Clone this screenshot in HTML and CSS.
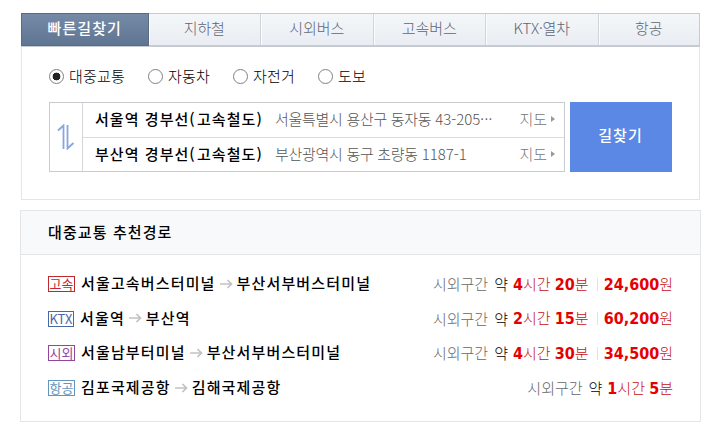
FILE: index.html
```html
<!DOCTYPE html>
<html lang="ko">
<head>
<meta charset="utf-8">
<title>빠른길찾기</title>
<link rel="stylesheet" href="styles.css">
</head>
<body>
<main class="page">
  <section class="finder">
    <nav class="tabs">
      <a class="tab active">빠른길찾기</a>
      <a class="tab">지하철</a>
      <a class="tab">시외버스</a>
      <a class="tab">고속버스</a>
      <a class="tab">KTX·열차</a>
      <a class="tab last">항공</a>
    </nav>
    <div class="modes">
      <label class="mode wide"><i class="radio on"></i>대중교통</label>
      <label class="mode"><i class="radio"></i>자동차</label>
      <label class="mode"><i class="radio"></i>자전거</label>
      <label class="mode"><i class="radio"></i>도보</label>
    </div>
    <div class="search">
      <div class="box">
        <div class="swap">
          <svg width="18" height="26" viewBox="0 0 18 26" fill="none" stroke="#86a6e2" stroke-width="1.8"><path d="M6.500 25V1.500L1 6.500"/><path d="M10.500 1v23.500L16.500 19"/></svg>
        </div>
        <div class="places">
          <div class="place"><b class="name">서울역 경부선<span class="paren">(</span>고속철도<span class="paren">)</span></b><span class="addr">서울특별시 용산구 동자동 <span class="num">43-205</span><span class="dots">···</span></span><a class="map">지도<i class="tri"></i></a></div>
          <div class="place"><b class="name">부산역 경부선<span class="paren">(</span>고속철도<span class="paren">)</span></b><span class="addr">부산광역시 동구 초량동 <span class="num">1187-1</span></span><a class="map">지도<i class="tri"></i></a></div>
        </div>
      </div>
      <button class="go">길찾기</button>
    </div>
  </section>
  <section class="routes">
    <h2 class="title">대중교통 추천경로</h2>
    <ul class="list">
      <li class="row"><span class="badge express">고속</span><b class="stop">서울고속버스터미널</b><svg class="arrow" width="13" height="10" viewBox="0 0 13 10"><path d="M0 5h11M7.500 1l4 4-4 4"/></svg><b class="stop">부산서부버스터미널</b><span class="info"><span class="leg">시외구간</span><span class="about">약</span><span class="red"><b>4</b>시간 <b>20</b>분</span><i class="bar"></i><span class="red"><b>24,600</b>원</span></span></li>
      <li class="row"><span class="badge ktx">KTX</span><b class="stop">서울역</b><svg class="arrow" width="13" height="10" viewBox="0 0 13 10"><path d="M0 5h11M7.500 1l4 4-4 4"/></svg><b class="stop">부산역</b><span class="info"><span class="leg">시외구간</span><span class="about">약</span><span class="red"><b>2</b>시간 <b>15</b>분</span><i class="bar"></i><span class="red"><b>60,200</b>원</span></span></li>
      <li class="row"><span class="badge intercity">시외</span><b class="stop">서울남부터미널</b><svg class="arrow" width="13" height="10" viewBox="0 0 13 10"><path d="M0 5h11M7.500 1l4 4-4 4"/></svg><b class="stop">부산서부버스터미널</b><span class="info"><span class="leg">시외구간</span><span class="about">약</span><span class="red"><b>4</b>시간 <b>30</b>분</span><i class="bar"></i><span class="red"><b>34,500</b>원</span></span></li>
      <li class="row"><span class="badge air">항공</span><b class="stop">김포국제공항</b><svg class="arrow" width="13" height="10" viewBox="0 0 13 10"><path d="M0 5h11M7.500 1l4 4-4 4"/></svg><b class="stop">김해국제공항</b><span class="info"><span class="leg">시외구간</span><span class="about">약</span><span class="red"><b>1</b>시간 <b>5</b>분</span></span></li>
    </ul>
  </section>
</main>
</body>
</html>
```
FILE: styles.css
```css
* { box-sizing: border-box; }
body { margin: 0; background: #fff; color: #000; font: 300 15px/20px "Noto Sans CJK KR", sans-serif; white-space: nowrap; }
.page { padding: 13px 24px 0 20px; }
b { font-weight: 500; }

.finder { width: 679px; height: 187px; margin-left: 1px; border: 1px solid #e5e5e5; border-top: 0; }
.tabs { display: flex; height: 34px; margin: 0 -1px; border: 1px solid #c5cbd1; border-bottom: 2px solid #c5cbd1; border-left: 0; background: linear-gradient(#f4f7f9, #e9edf3); }
.tab { width: 112.500px; height: 31px; border-right: 1px solid #d0d5db; box-shadow: inset 1px 0 #fafcfd; color: #5d6676; text-align: center; line-height: 28px; letter-spacing: -.1px; }
.tab.active { width: 127.500px; height: 33px; margin-top: -1px; border: 1px solid #5a6b84; background: linear-gradient(#748aa7, #607592); box-shadow: none; color: #fff; font-weight: 500; letter-spacing: 1.100px; }
.tab.last { flex: 1; border-right: 0; }

.modes { display: flex; padding: 19px 0 0 27px; height: 55px; }
.mode { display: flex; align-items: center; width: 85px; height: 20px; letter-spacing: .2px; }
.mode.wide { width: 99px; }
.radio { width: 15px; height: 15px; margin-right: 5px; border: 1.500px solid #808080; border-radius: 50%; }
.radio.on { background: radial-gradient(circle, #222 3.600px, #fff 4.200px); }

.search { display: flex; gap: 5px; padding-left: 27px; }
.box { display: flex; width: 516px; height: 70px; border: 1px solid #c9cccf; }
.swap { display: flex; align-items: center; justify-content: center; width: 33px; border-right: 1px solid #d3d5d8; }
.places { flex: 1; }
.place { display: flex; align-items: center; height: 34px; padding: 0 9px 3px 12px; }
.place:first-child { height: 35px; border-bottom: 1px solid #dcdcdc; }
.name { width: 180px; letter-spacing: 1.050px; }
.paren { letter-spacing: 2.300px; }
.addr { color: #555; letter-spacing: -.3px; }
.num { letter-spacing: 0; }
.dots { letter-spacing: .3px; }
.map { display: flex; align-items: center; margin-left: auto; color: #777; }
.tri { width: 0; height: 0; margin-left: 4px; border: 3.500px solid transparent; border-left: 4px solid #999; border-right: 0; }
.go { width: 102px; height: 70px; padding: 0 1px 5px 0; border: 0; background: #5b88e5; color: #fff; font: 500 15px "Noto Sans CJK KR", sans-serif; letter-spacing: 1px; }

.routes { width: 681px; height: 212px; margin-top: 10px; border: 1px solid #e5e5e5; }
.title { height: 44px; margin: 0; padding-left: 27px; border-bottom: 1px solid #e5e5e5; background: #f8f9fb; font-size: 15px; font-weight: 500; line-height: 41px; letter-spacing: 1.100px; }
.list { margin: 0; padding: 12px 27px 0; list-style: none; }
.row { display: flex; align-items: center; height: 34.600px; }
.badge { width: 27px; height: 16px; margin-right: 6px; border: 1px solid; font-size: 13px; font-weight: 400; line-height: 13px; text-align: center; }
.express { color: #c0282d; }
.ktx { width: 26px; color: #4a68a5; }
.intercity { color: #96459b; }
.air { color: #6096c0; }
.stop { margin-top: -2px; letter-spacing: 1.150px; }
.arrow { margin: -1px 4px 0; fill: none; stroke: #c2c2c2; stroke-width: 1.700; }
.info { display: flex; align-items: center; margin-left: auto; }
.leg { color: #666; margin-right: 6px; }
.about { margin-right: 5px; }
.red { color: #c61010; }
.red b { color: #e60000; font: bold 16px/20px "DejaVu Sans Condensed", "DejaVu Sans", sans-serif; }
.bar { width: 1px; height: 13px; margin: 0 6px 0 8px; background: #e2e2e2; }
```
